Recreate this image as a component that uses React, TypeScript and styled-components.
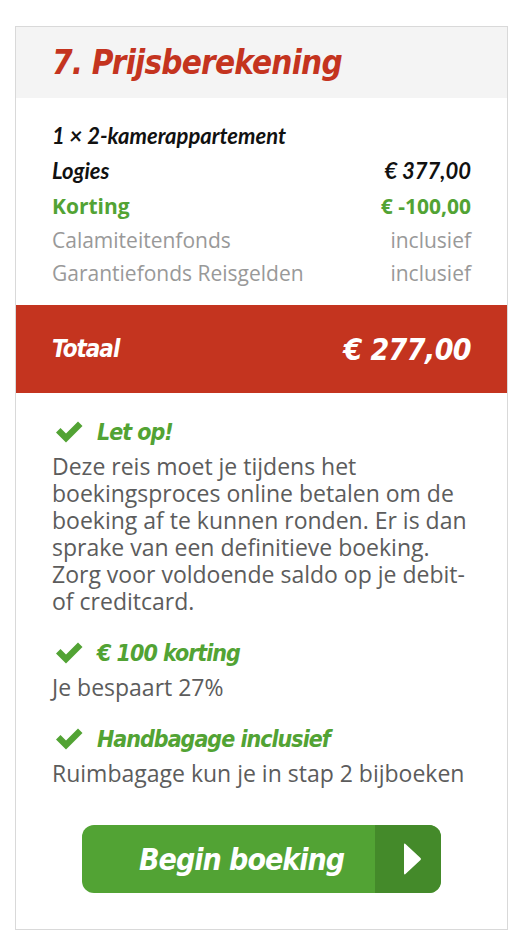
import styled, { createGlobalStyle } from 'styled-components'

const GlobalStyle = createGlobalStyle`
  body {
    margin: 0;
    background: #fff;
    font-family: 'Open Sans', sans-serif;
  }
`

const Red = '#c4341f'
const Green = '#52a334'
const DarkGreen = '#448a2a'
const Grey = '#5c5c5c'
const Display = "'DejaVu Sans Condensed', 'DejaVu Sans', sans-serif"

interface PriceLine {
  label: string
  amount?: string
  kind: 'room' | 'main' | 'discount' | 'muted'
}

const lines: PriceLine[] = [
  { label: '1 × 2-kamerappartement', kind: 'room' },
  { label: 'Logies', amount: '€ 377,00', kind: 'main' },
  { label: 'Korting', amount: '€ -100,00', kind: 'discount' },
  { label: 'Calamiteitenfonds', amount: 'inclusief', kind: 'muted' },
  { label: 'Garantiefonds Reisgelden', amount: 'inclusief', kind: 'muted' },
]

const notes = [
  {
    title: 'Let op!',
    text: 'Deze reis moet je tijdens het boekingsproces online betalen om de boeking af te kunnen ronden. Er is dan sprake van een definitieve boeking. Zorg voor voldoende saldo op je debit-of creditcard.',
  },
  { title: '€ 100 korting', text: 'Je bespaart 27%' },
  { title: 'Handbagage inclusief', text: 'Ruimbagage kun je in stap 2 bijboeken' },
]

const CheckIcon = () => (
  <svg width="29" height="22" viewBox="0 0 29 22" aria-hidden>
    <path d="M1 11.5 L5.5 7 L11 12.5 L23 0.5 L27.5 5 L11 21.5 Z" fill={Green} strokeLinejoin="round" />
  </svg>
)

const ArrowIcon = () => (
  <svg width="21" height="34" viewBox="0 0 21 34" aria-hidden>
    <path d="M2 3 Q2 0.5 4 2.5 L18.5 16 Q19.5 17 18.5 18 L4 31.5 Q2 33.5 2 31 Z" fill="#fff" />
  </svg>
)

export default function App() {
  return (
    <Page>
      <GlobalStyle />
      <Card>
        <Header>
          <Title>7. Prijsberekening</Title>
        </Header>

        <Lines>
          {lines.map((line) => (
            <Line key={line.label} kind={line.kind}>
              <span>{line.label}</span>
              {line.amount && <span>{line.amount}</span>}
            </Line>
          ))}
        </Lines>

        <Total>
          <TotalLabel>Totaal</TotalLabel>
          <TotalAmount>€ 277,00</TotalAmount>
        </Total>

        <Notes>
          {notes.map((note) => (
            <Note key={note.title}>
              <NoteTitle>
                <CheckIcon />
                <span>{note.title}</span>
              </NoteTitle>
              <NoteText>{note.text}</NoteText>
            </Note>
          ))}
        </Notes>

        <ButtonRow>
          <BookButton type="button">
            <ButtonLabel>Begin boeking</ButtonLabel>
            <ButtonArrow>
              <ArrowIcon />
            </ButtonArrow>
          </BookButton>
        </ButtonRow>
      </Card>
    </Page>
  )
}

const Page = styled.div`
  padding: 26px 20px 10px 15px;
`

const Card = styled.section`
  border: 1px solid #d9d9d9;
  background: #fff;
`

const Header = styled.div`
  display: flex;
  align-items: center;
  height: 71px;
  padding: 0 36px;
  background: #f4f4f4;
`

const Title = styled.h2`
  margin: 0;
  color: ${Red};
  font-family: ${Display};
  font-size: 33px;
  font-weight: 700;
  font-style: italic;
  letter-spacing: -0.8px;
`

const Lines = styled.div`
  display: flex;
  flex-direction: column;
  padding: 20px 36px 16px;
`

const Line = styled.div<{ kind: PriceLine['kind'] }>`
  display: flex;
  justify-content: space-between;
  align-items: center;
  height: ${({ kind }) => (kind === 'muted' ? '33px' : '35px')};
  font-size: ${({ kind }) => (kind === 'room' || kind === 'main' ? '22px' : '21px')};
  font-family: ${({ kind }) =>
    kind === 'room' || kind === 'main' ? "Lato, 'Open Sans', sans-serif" : "'Open Sans', sans-serif"};
  font-style: ${({ kind }) => (kind === 'room' || kind === 'main' ? 'italic' : 'normal')};
  font-weight: ${({ kind }) => (kind === 'muted' ? 400 : 700)};
  color: ${({ kind }) => (kind === 'discount' ? Green : kind === 'muted' ? '#999' : '#111')};
`

const Total = styled.div`
  display: flex;
  justify-content: space-between;
  align-items: center;
  height: 88px;
  padding: 0 36px;
  background: ${Red};
  color: #fff;
  font-family: ${Display};
  font-style: italic;
  font-weight: 700;
`

const TotalLabel = styled.span`
  font-size: 24px;
  letter-spacing: -1px;
`

const TotalAmount = styled.span`
  font-size: 30px;
  letter-spacing: -0.6px;
`

const Notes = styled.div`
  display: flex;
  flex-direction: column;
  gap: 21px;
  padding: 22px 36px 0;
`

const Note = styled.div`
  display: flex;
  flex-direction: column;
`

const NoteTitle = styled.div`
  display: flex;
  align-items: center;
  gap: 13px;
  height: 34px;
  margin-bottom: 4px;
  padding-left: 3px;
  color: ${Green};
  font-family: ${Display};
  font-size: 23px;
  font-style: italic;
  font-weight: 700;
  letter-spacing: -1px;
`

const NoteText = styled.p`
  margin: 0;
  color: ${Grey};
  font-size: 23px;
  line-height: 27px;
`

const ButtonRow = styled.div`
  display: flex;
  justify-content: center;
  padding: 38px 0 36px;
`

const BookButton = styled.button`
  display: flex;
  width: 359px;
  height: 68px;
  padding: 0;
  border: 0;
  border-radius: 12px;
  overflow: hidden;
  background: ${Green};
  cursor: pointer;
`

const ButtonLabel = styled.span`
  flex: 1;
  display: flex;
  align-items: center;
  justify-content: center;
  padding-left: 26px;
  color: #fff;
  font-family: ${Display};
  font-size: 30px;
  font-style: italic;
  font-weight: 700;
  letter-spacing: -1px;
`

const ButtonArrow = styled.span`
  display: flex;
  align-items: center;
  justify-content: center;
  width: 66px;
  padding-left: 8px;
  box-sizing: border-box;
  background: ${DarkGreen};
`
